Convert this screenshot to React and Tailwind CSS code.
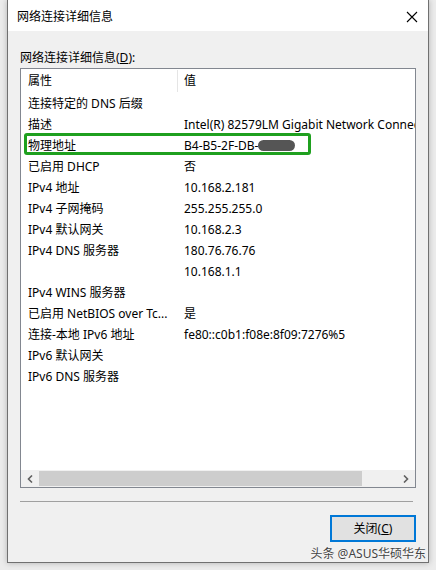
const FONT = {
  fontFamily: '"Segoe UI", "Noto Sans", "Noto Sans CJK SC", sans-serif'
};

const ROWS = [
  ["连接特定的 DNS 后缀", ""],
  ["描述", "Intel(R) 82579LM Gigabit Network Connection"],
  ["物理地址", "B4-B5-2F-DB-"],
  ["已启用 DHCP", "否"],
  ["IPv4 地址", "10.168.2.181"],
  ["IPv4 子网掩码", "255.255.255.0"],
  ["IPv4 默认网关", "10.168.2.3"],
  ["IPv4 DNS 服务器", "180.76.76.76"],
  ["", "10.168.1.1"],
  ["IPv4 WINS 服务器", ""],
  ["已启用 NetBIOS over Tc...", "是"],
  ["连接-本地 IPv6 地址", "fe80::c0b1:f08e:8f09:7276%5"],
  ["IPv6 默认网关", ""],
  ["IPv6 DNS 服务器", ""]
];

export default function App() {
  return (
    <div
      className="w-[436px] h-[570px] bg-[#ececec] pl-[7px] text-[12px] text-black overflow-hidden"
      style={FONT}
    >
      <div className="w-[422px] h-[563px] bg-[#f0f0f0] border-x border-b border-[#707070] flex flex-col shadow-[0_0_6px_rgba(0,0,0,0.25)]">
        {/* title bar */}
        <div className="h-[31px] shrink-0 bg-white flex items-center justify-between pl-[9px] pr-[8px] pt-[2px]">
          <span>网络连接详细信息</span>
          <svg width="12" height="12" viewBox="0 0 12 12" className="mr-[2px]">
            <path d="M1 1 L11 11 M11 1 L1 11" stroke="#000" strokeWidth="1.1" />
          </svg>
        </div>

        <div className="flex flex-col px-[12px]">
          <div className="h-[37px] shrink-0 flex items-end pb-[1px]">
            <span>
              网络连接详细信息(<span className="underline">D</span>):
            </span>
          </div>

          {/* list view */}
          <div className="w-[396px] h-[420px] shrink-0 border border-[#828790] bg-white flex flex-col overflow-hidden">
            <div className="relative flex-1 overflow-hidden">
              <div className="h-[24px] flex items-center">
                <div className="w-[157px] pl-[7px] border-r border-[#e5e5e5] h-[22px] flex items-center">
                  属性
                </div>
                <div className="pl-[6px]">值</div>
              </div>
              {ROWS.map(([k, v], i) => (
                <div key={i} className="h-[21px] flex items-center whitespace-nowrap">
                  <div className="w-[158px] pl-[7px] shrink-0">{k}</div>
                  <div className="pl-[5px] flex items-center">
                    {v}
                    {i === 2 && (
                      <span className="inline-block w-[37px] h-[11px] rounded-full bg-[#555] blur-[0.5px]" />
                    )}
                  </div>
                </div>
              ))}
              <div className="absolute left-[3px] top-[64px] w-[287px] h-[22px] border-[3px] border-[#1fa01f] rounded-[3px]" />
            </div>

            {/* horizontal scrollbar */}
            <div className="h-[17px] shrink-0 bg-[#f0f0f0] flex items-center">
              <div className="w-[18px] flex justify-center">
                <svg width="6" height="8" viewBox="0 0 6 8">
                  <path d="M5 0.5 L1.5 4 L5 7.5" stroke="#606060" strokeWidth="1.6" fill="none" />
                </svg>
              </div>
              <div className="w-[323px] h-[15px] bg-[#cdcdcd]" />
              <div className="flex-1" />
              <div className="w-[18px] flex justify-center">
                <svg width="6" height="8" viewBox="0 0 6 8">
                  <path d="M1 0.5 L4.5 4 L1 7.5" stroke="#606060" strokeWidth="1.6" fill="none" />
                </svg>
              </div>
            </div>
          </div>

          <div className="mt-[13px] shrink-0 w-[393px] h-px bg-[#a0a0a0]" />

          <div className="flex shrink-0 justify-end mt-[13px]">
            <button className="w-[86px] h-[27px] bg-[#e1e1e1] border-2 border-[#0078d7]">
              关闭(<span className="underline">C</span>)
            </button>
          </div>

          <div className="flex shrink-0 justify-end mt-[4px] -mr-[10px] leading-[16px]">
            <span className="text-[#444] text-[12px] [text-shadow:0_0_2px_#fff]">头条 @ASUS华硕华东</span>
          </div>
        </div>
      </div>
    </div>
  );
}
